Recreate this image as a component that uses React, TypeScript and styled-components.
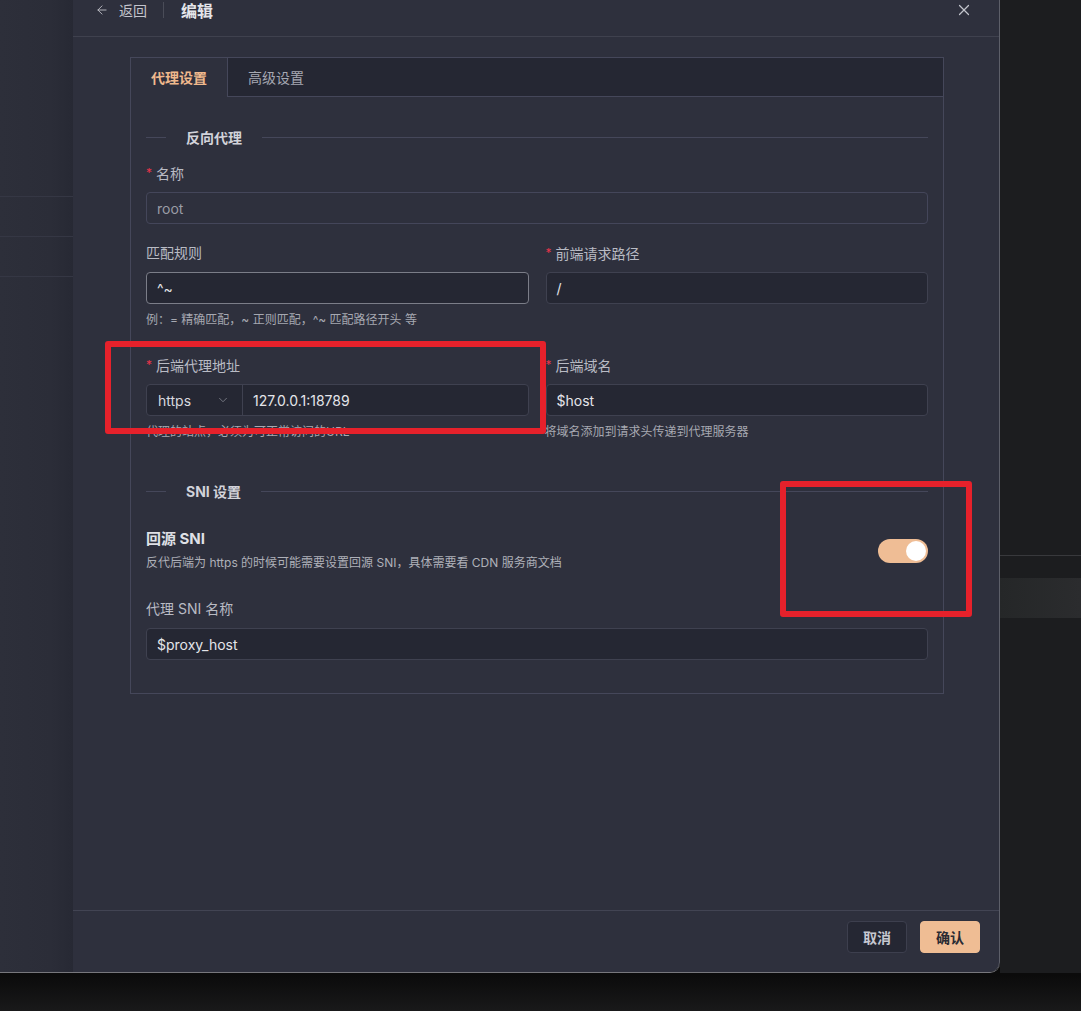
import React from 'react';
import styled, { createGlobalStyle } from 'styled-components';
import { ArrowLeft, X, ChevronDown } from 'lucide-react';

const GlobalStyle = createGlobalStyle`
  html, body {
    margin: 0;
    padding: 0;
    background: #111112;
  }
  * {
    box-sizing: border-box;
  }
  body {
    font-family: Inter, "Noto Sans CJK SC", sans-serif;
  }
`;

const Screen = styled.div`
  position: relative;
  width: 1081px;
  height: 1011px;
  overflow: hidden;
  display: flex;
  align-items: flex-start;
  background: linear-gradient(180deg, #0b0b0b 975px, #19191a 1011px);
`;

const Window = styled.div`
  width: 1000px;
  height: 973px;
  display: flex;
  border-bottom: 1px solid #77777c;
  border-bottom-right-radius: 10px;
  overflow: hidden;
  flex-shrink: 0;
`;

const SidePane = styled.div`
  width: 73px;
  flex-shrink: 0;
  padding-top: 196px;
  background: linear-gradient(90deg, #2d2f3a 0%, #2b2d38 70%, #272934 100%);
`;

const SideRow = styled.div`
  height: 40px;
  border-top: 1px solid #353744;
`;

const Drawer = styled.div`
  flex: 1;
  display: flex;
  flex-direction: column;
  background: #2e303d;
  border-right: 1px solid #5d5f69;
  border-bottom-right-radius: 10px;
`;

const Header = styled.div`
  height: 37px;
  display: flex;
  align-items: center;
  padding: 0 26px 16px 22px;
  border-bottom: 1px solid #3f414e;
`;

const BackLink = styled.div`
  display: flex;
  align-items: center;
  gap: 10px;
  color: #c3c4cc;
  font-size: 14px;
`;

const HeaderSep = styled.div`
  width: 1px;
  height: 16px;
  margin: 0 17px 0 16px;
  background: #4a4c58;
`;

const Title = styled.div`
  flex: 1;
  font-size: 16px;
  font-weight: 700;
  color: #e4e5ea;
`;

const CloseIcon = styled.div`
  display: flex;
  color: #c2c4cc;
`;

const Body = styled.div`
  flex: 1;
  padding: 20px 55px 0 57px;
`;

const Card = styled.div`
  border: 1px solid #45475a;
  background: #2e303d;
  padding-bottom: 33px;
`;

const TabBar = styled.div`
  display: flex;
  height: 39px;
  background: #252733;
  border-bottom: 1px solid #45475a;
`;

const Tab = styled.div<{ $active?: boolean }>`
  display: flex;
  align-items: center;
  padding: 0 20px 1px;
  font-size: 14px;
  color: ${(p) => (p.$active ? '#f0b98d' : '#a6a8b2')};
  background: ${(p) => (p.$active ? '#2e303d' : 'transparent')};
  border-right: ${(p) => (p.$active ? '1px solid #45475a' : 'none')};
  margin-bottom: ${(p) => (p.$active ? '-1px' : '0')};
  font-weight: ${(p) => (p.$active ? 600 : 400)};
`;

const Content = styled.div`
  padding: 0 15px 0 15px;
`;

const Divider = styled.div<{ $top: number }>`
  display: flex;
  align-items: center;
  height: 22px;
  margin-top: ${(p) => p.$top}px;
  font-size: 14px;
  font-weight: 700;
  color: #d2d3da;

  &::before {
    content: '';
    width: 20px;
    height: 1px;
    background: #45475a;
    margin-right: 20px;
  }
  &::after {
    content: '';
    flex: 1;
    height: 1px;
    background: #45475a;
    margin-left: 20px;
  }
`;

const Row = styled.div<{ $top: number }>`
  display: grid;
  grid-template-columns: 1fr 1fr;
  column-gap: 17px;
  margin-top: ${(p) => p.$top}px;
`;

const Field = styled.div<{ $top?: number }>`
  display: flex;
  flex-direction: column;
  margin-top: ${(p) => p.$top ?? 0}px;
`;

const Label = styled.div<{ $required?: boolean }>`
  height: 22px;
  line-height: 22px;
  margin-bottom: 8px;
  font-size: 14px;
  color: #b9bbc4;

  &::before {
    content: ${(p) => (p.$required ? "'*'" : "''")};
    color: #e8344a;
    font-size: 12px;
    margin-right: 4px;
    vertical-align: 2px;
    display: ${(p) => (p.$required ? 'inline' : 'none')};
  }
`;

const Input = styled.div<{ $variant?: 'disabled' | 'focused' }>`
  height: 32px;
  display: flex;
  align-items: center;
  padding: 0 10px;
  border-radius: 4px;
  font-size: 14px;
  border: 1px solid
    ${(p) =>
      p.$variant === 'focused' ? '#7b7d88' : p.$variant === 'disabled' ? '#44465a' : '#3f4150'};
  background: ${(p) => (p.$variant === 'disabled' ? '#2e303d' : '#252733')};
  color: ${(p) => (p.$variant === 'disabled' ? '#9a9ca6' : '#e4e5ea')};
`;

const InputGroup = styled.div`
  height: 32px;
  display: flex;
  border: 1px solid #3f4150;
  border-radius: 4px;
  background: #252733;
  font-size: 14px;
  color: #e4e5ea;
`;

const Select = styled.div`
  width: 96px;
  display: flex;
  align-items: center;
  justify-content: space-between;
  padding: 0 12px 0 11px;
  border-right: 1px solid #3f4150;
  color: #d8d9df;
`;

const GroupInput = styled.div`
  flex: 1;
  display: flex;
  align-items: center;
  padding: 0 10px;
`;

const Help = styled.div<{ $shift?: number }>`
  height: 20px;
  line-height: 20px;
  margin-top: 6px;
  margin-left: ${(p) => p.$shift ?? 0}px;
  font-size: 12px;
  color: #a6a8b1;
  white-space: nowrap;
`;

const SwitchRow = styled.div`
  display: flex;
  align-items: center;
  justify-content: space-between;
  margin-top: 26px;
`;

const SwitchText = styled.div`
  display: flex;
  flex-direction: column;
`;

const SwitchTitle = styled.div`
  height: 22px;
  line-height: 22px;
  font-size: 15px;
  font-weight: 700;
  color: #dfe0e6;
`;

const SwitchDesc = styled.div`
  height: 20px;
  line-height: 20px;
  margin-top: 3px;
  font-size: 12px;
  color: #aeb0b9;
`;

const Toggle = styled.div<{ $on: boolean }>`
  width: 50px;
  height: 24px;
  border-radius: 12px;
  padding: 2px;
  display: flex;
  justify-content: ${(p) => (p.$on ? 'flex-end' : 'flex-start')};
  background: ${(p) => (p.$on ? '#efbd95' : '#4a4c58')};

  &::after {
    content: '';
    width: 20px;
    height: 20px;
    border-radius: 50%;
    background: #ffffff;
  }
`;

const Footer = styled.div`
  height: 62px;
  display: flex;
  align-items: flex-start;
  justify-content: flex-end;
  gap: 13px;
  padding: 10px 19px 0 0;
  border-top: 1px solid #424453;
`;

const Button = styled.div<{ $primary?: boolean }>`
  height: 32px;
  padding: 0 15px;
  display: flex;
  align-items: center;
  border-radius: 4px;
  font-size: 14px;
  font-weight: 700;
  color: ${(p) => (p.$primary ? '#2a2b33' : '#c6c8d0')};
  background: ${(p) => (p.$primary ? '#efbd94' : '#252733')};
  border: 1px solid ${(p) => (p.$primary ? '#efbd94' : '#3d3f4e')};
`;

const Backdrop = styled.div`
  flex: 1;
  height: 973px;
  padding-top: 555px;
  background: #1c1d1f;
`;

const BackdropLine = styled.div`
  height: 23px;
  border-top: 1px solid #38393c;
`;

const BackdropBand = styled.div`
  height: 40px;
  background: linear-gradient(90deg, #252728, #2b2c2e);
`;

const Annotation = styled.div<{ $x: number; $y: number; $w: number; $h: number }>`
  position: absolute;
  left: ${(p) => p.$x}px;
  top: ${(p) => p.$y}px;
  width: ${(p) => p.$w}px;
  height: ${(p) => p.$h}px;
  border: 6px solid #e6212b;
  border-radius: 3px;
  pointer-events: none;
`;

const App: React.FC = () => (
  <Screen>
    <GlobalStyle />
    <Window>
      <SidePane>
        <SideRow />
        <SideRow />
        <SideRow />
      </SidePane>
      <Drawer>
        <Header>
          <BackLink>
            <ArrowLeft size={14} strokeWidth={1.5} />
            返回
          </BackLink>
          <HeaderSep />
          <Title>编辑</Title>
          <CloseIcon>
            <X size={18} strokeWidth={1.6} />
          </CloseIcon>
        </Header>
        <Body>
          <Card>
            <TabBar>
              <Tab $active>代理设置</Tab>
              <Tab>高级设置</Tab>
            </TabBar>
            <Content>
              <Divider $top={29}>反向代理</Divider>
              <Field $top={14}>
                <Label $required>名称</Label>
                <Input $variant="disabled">root</Input>
              </Field>
              <Row $top={18}>
                <Field>
                  <Label>匹配规则</Label>
                  <Input $variant="focused">^~</Input>
                  <Help>例：= 精确匹配，~ 正则匹配，^~ 匹配路径开头 等</Help>
                </Field>
                <Field>
                  <Label $required>前端请求路径</Label>
                  <Input>/</Input>
                </Field>
              </Row>
              <Row $top={24}>
                <Field>
                  <Label $required>后端代理地址</Label>
                  <InputGroup>
                    <Select>
                      https
                      <ChevronDown size={14} strokeWidth={1.3} color="#8b8d97" />
                    </Select>
                    <GroupInput>127.0.0.1:18789</GroupInput>
                  </InputGroup>
                  <Help>代理的站点，必须为可正常访问的URL</Help>
                </Field>
                <Field>
                  <Label $required>后端域名</Label>
                  <Input>$host</Input>
                  <Help $shift={-1}>将域名添加到请求头传递到代理服务器</Help>
                </Field>
              </Row>
              <Divider $top={38}>SNI 设置</Divider>
              <SwitchRow>
                <SwitchText>
                  <SwitchTitle>回源 SNI</SwitchTitle>
                  <SwitchDesc>
                    反代后端为 https 的时候可能需要设置回源 SNI，具体需要看 CDN 服务商文档
                  </SwitchDesc>
                </SwitchText>
                <Toggle $on />
              </SwitchRow>
              <Field $top={25}>
                <Label>代理 SNI 名称</Label>
                <Input>$proxy_host</Input>
              </Field>
            </Content>
          </Card>
        </Body>
        <Footer>
          <Button>取消</Button>
          <Button $primary>确认</Button>
        </Footer>
      </Drawer>
    </Window>
    <Backdrop>
      <BackdropLine />
      <BackdropBand />
    </Backdrop>
    <Annotation $x={105} $y={341} $w={441} $h={93} />
    <Annotation $x={780} $y={481} $w={192} $h={136} />
  </Screen>
);

export default App;
